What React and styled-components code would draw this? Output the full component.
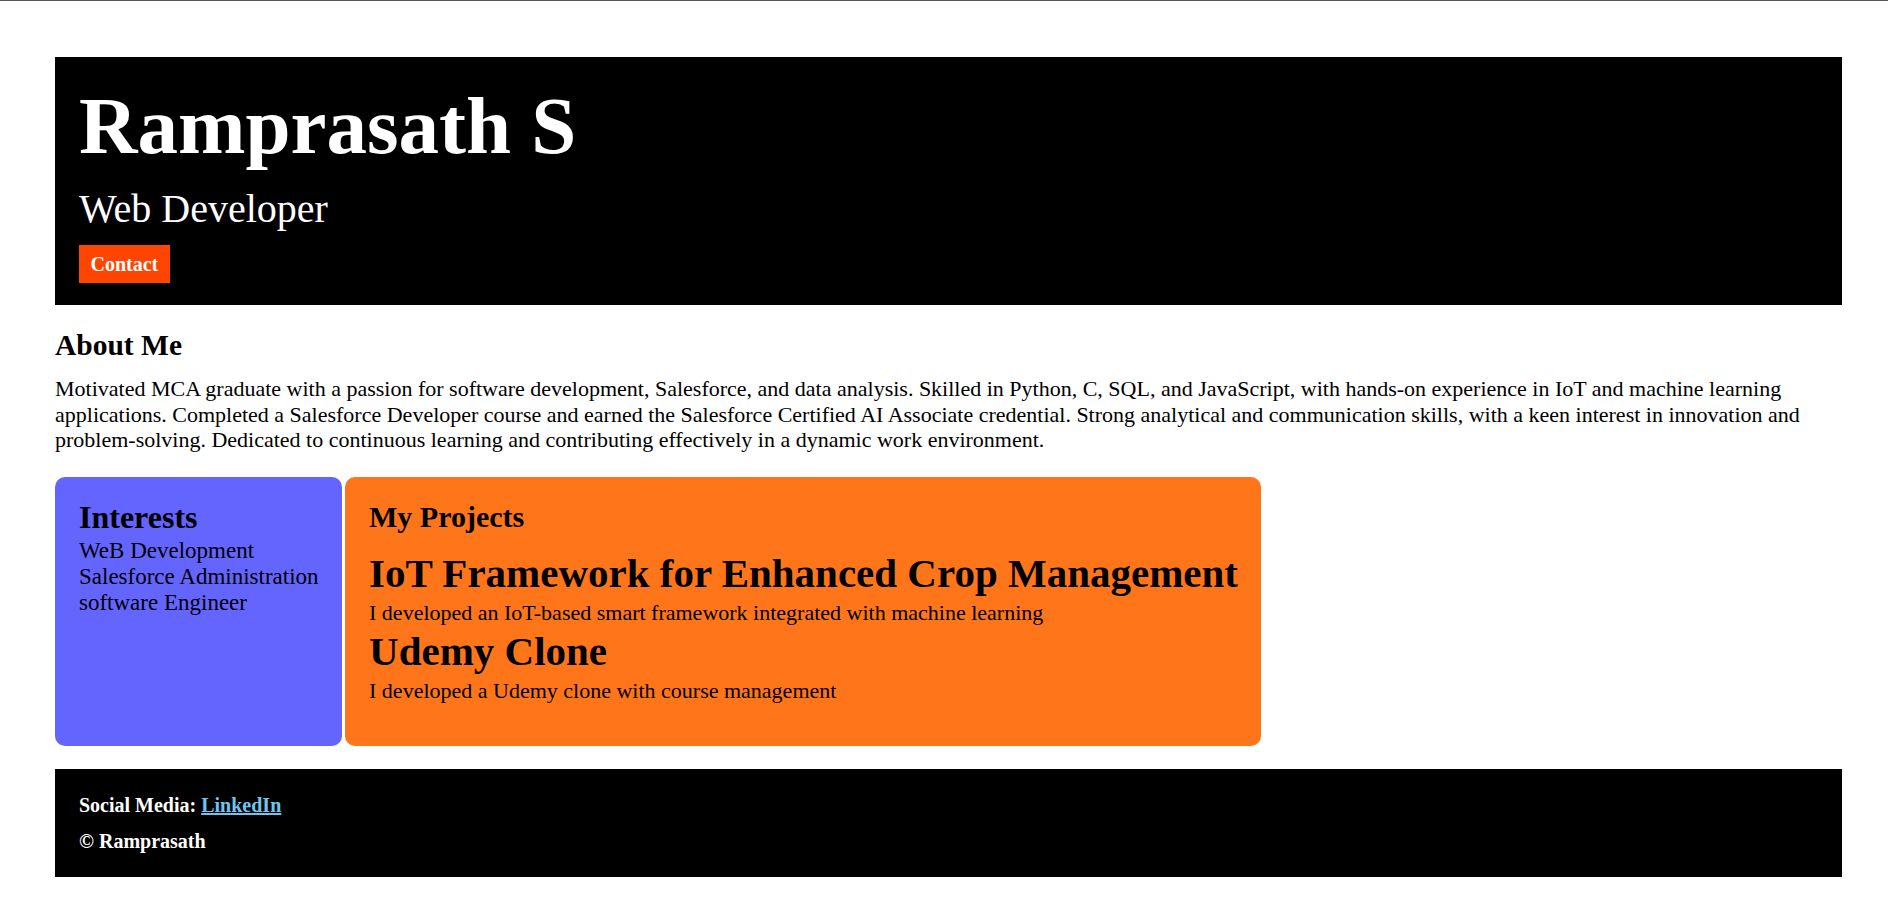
import React from 'react'
import styled, { createGlobalStyle } from 'styled-components'

const GlobalStyle = createGlobalStyle`
  html, body {
    margin: 0;
    padding: 0;
    background: #fff;
  }

  body {
    border-top: 1px solid #555;
    font-family: 'Liberation Serif', 'Times New Roman', serif;
    color: #000;
  }
`

const Page = styled.div`
  width: 1787px;
  padding: 56px 0 30px 55px;
`

const Hero = styled.header`
  background: #000;
  color: #fff;
  padding: 26px 24px 22px;

  h1 {
    margin: 0;
    font-size: 81px;
    line-height: 86px;
    font-weight: 700;
  }

  h2 {
    margin: 16.5px 0 0;
    font-size: 40px;
    line-height: 46px;
    font-weight: 400;
  }
`

const ContactButton = styled.a`
  display: inline-block;
  margin-top: 13.5px;
  padding: 0 11.5px;
  height: 38px;
  line-height: 38px;
  background: #ff4500;
  color: #fff;
  font-size: 20px;
  font-weight: 700;
  text-decoration: none;
`

const About = styled.section`
  margin-top: 23px;

  h2 {
    margin: 0;
    font-size: 29.5px;
    line-height: 34px;
    font-weight: 700;
  }

  p {
    margin: 14px 0 0;
    font-size: 22px;
    line-height: 25.6px;
  }
`

const Cards = styled.div`
  display: flex;
  align-items: stretch;
  gap: 3.5px;
  margin-top: 24px;
`

const Card = styled.div`
  background: ${(p) => p.$bg};
  border-radius: 10px;
  padding: 22px 23px 42px 24px;

  h3 {
    margin: 0;
    font-size: ${(p) => p.$headSize || '32px'};
    line-height: 36px;
    font-weight: 700;
  }
`

const InterestList = styled.ul`
  list-style: none;
  margin: 3px 0 0;
  padding: 0;

  li {
    font-size: 23px;
    line-height: 26px;
  }
`

const Project = styled.div`
  margin-top: ${(p) => p.$gap};

  h4 {
    margin: 0;
    font-size: 41px;
    line-height: 46px;
    font-weight: 700;
    white-space: nowrap;
  }

  p {
    margin: 4.5px 0 0;
    font-size: 22px;
    line-height: 26px;
  }
`

const Footer = styled.footer`
  margin-top: 23px;
  background: #000;
  color: #fff;
  padding: 24px 24px 24px;
  font-size: 20px;
  line-height: 24px;
  font-weight: 700;

  p {
    margin: 0;
  }

  p + p {
    margin-top: 12px;
  }

  a {
    color: #6ec6f0;
    text-decoration: underline;
  }
`

const App = () => {
  return (
    <>
      <GlobalStyle />
      <Page>
        <Hero>
          <h1>Ramprasath S</h1>
          <h2>Web Developer</h2>
          <ContactButton href='#contact'>Contact</ContactButton>
        </Hero>

        <About>
          <h2>About Me</h2>
          <p>
            Motivated MCA graduate with a passion for software development,
            Salesforce, and data analysis. Skilled in Python, C, SQL, and
            JavaScript, with hands-on experience in IoT and machine learning
            applications. Completed a Salesforce Developer course and earned the
            Salesforce Certified AI Associate credential. Strong analytical and
            communication skills, with a keen interest in innovation and
            problem-solving. Dedicated to continuous learning and contributing
            effectively in a dynamic work environment.
          </p>
        </About>

        <Cards>
          <Card $bg='#6464ff'>
            <h3>Interests</h3>
            <InterestList>
              <li>WeB Development</li>
              <li>Salesforce Administration</li>
              <li>software Engineer</li>
            </InterestList>
          </Card>

          <Card $bg='#ff761a' $headSize='30px'>
            <h3>My Projects</h3>
            <Project $gap='15px'>
              <h4>IoT Framework for Enhanced Crop Management</h4>
              <p>
                I developed an IoT-based smart framework integrated with machine
                learning
              </p>
            </Project>
            <Project $gap='1.5px'>
              <h4>Udemy Clone</h4>
              <p>I developed a Udemy clone with course management</p>
            </Project>
          </Card>
        </Cards>

        <Footer>
          <p>
            Social Media: <a href='#linkedin'>LinkedIn</a>
          </p>
          <p>© Ramprasath</p>
        </Footer>
      </Page>
    </>
  )
}

export default App
